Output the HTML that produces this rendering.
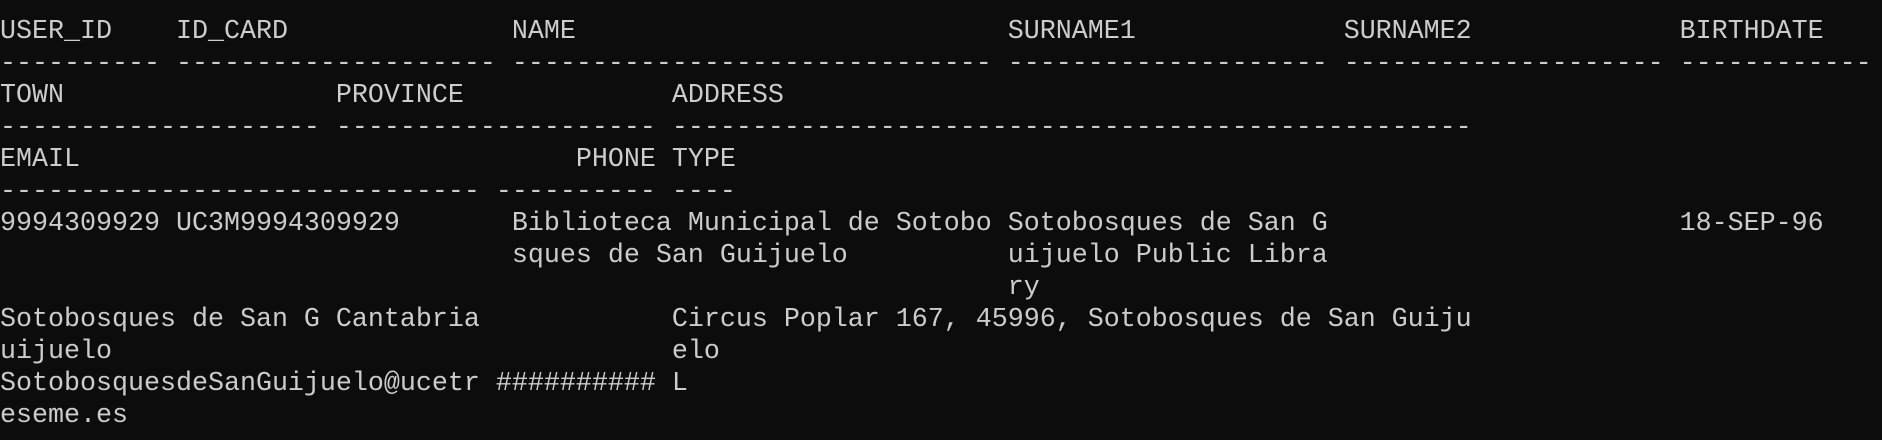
<!DOCTYPE html>
<html><head><meta charset="utf-8"><style>
html,body{margin:0;padding:0;background:#0c0c0c;width:1882px;height:440px;overflow:hidden}
pre{margin:0;position:absolute;left:0;top:16px;font-family:"Liberation Mono",monospace;font-size:26.67px;line-height:32px;color:#cccccc;white-space:pre}
</style></head><body><pre>USER_ID    ID_CARD              NAME                           SURNAME1             SURNAME2             BIRTHDATE
---------- -------------------- ------------------------------ -------------------- -------------------- ------------
TOWN                 PROVINCE             ADDRESS
-------------------- -------------------- --------------------------------------------------
EMAIL                               PHONE TYPE
------------------------------ ---------- ----
9994309929 UC3M9994309929       Biblioteca Municipal de Sotobo Sotobosques de San G                      18-SEP-96
                                sques de San Guijuelo          uijuelo Public Libra
                                                               ry
Sotobosques de San G Cantabria            Circus Poplar 167, 45996, Sotobosques de San Guiju
uijuelo                                   elo
SotobosquesdeSanGuijuelo@ucetr ########## L
eseme.es</pre></body></html>
